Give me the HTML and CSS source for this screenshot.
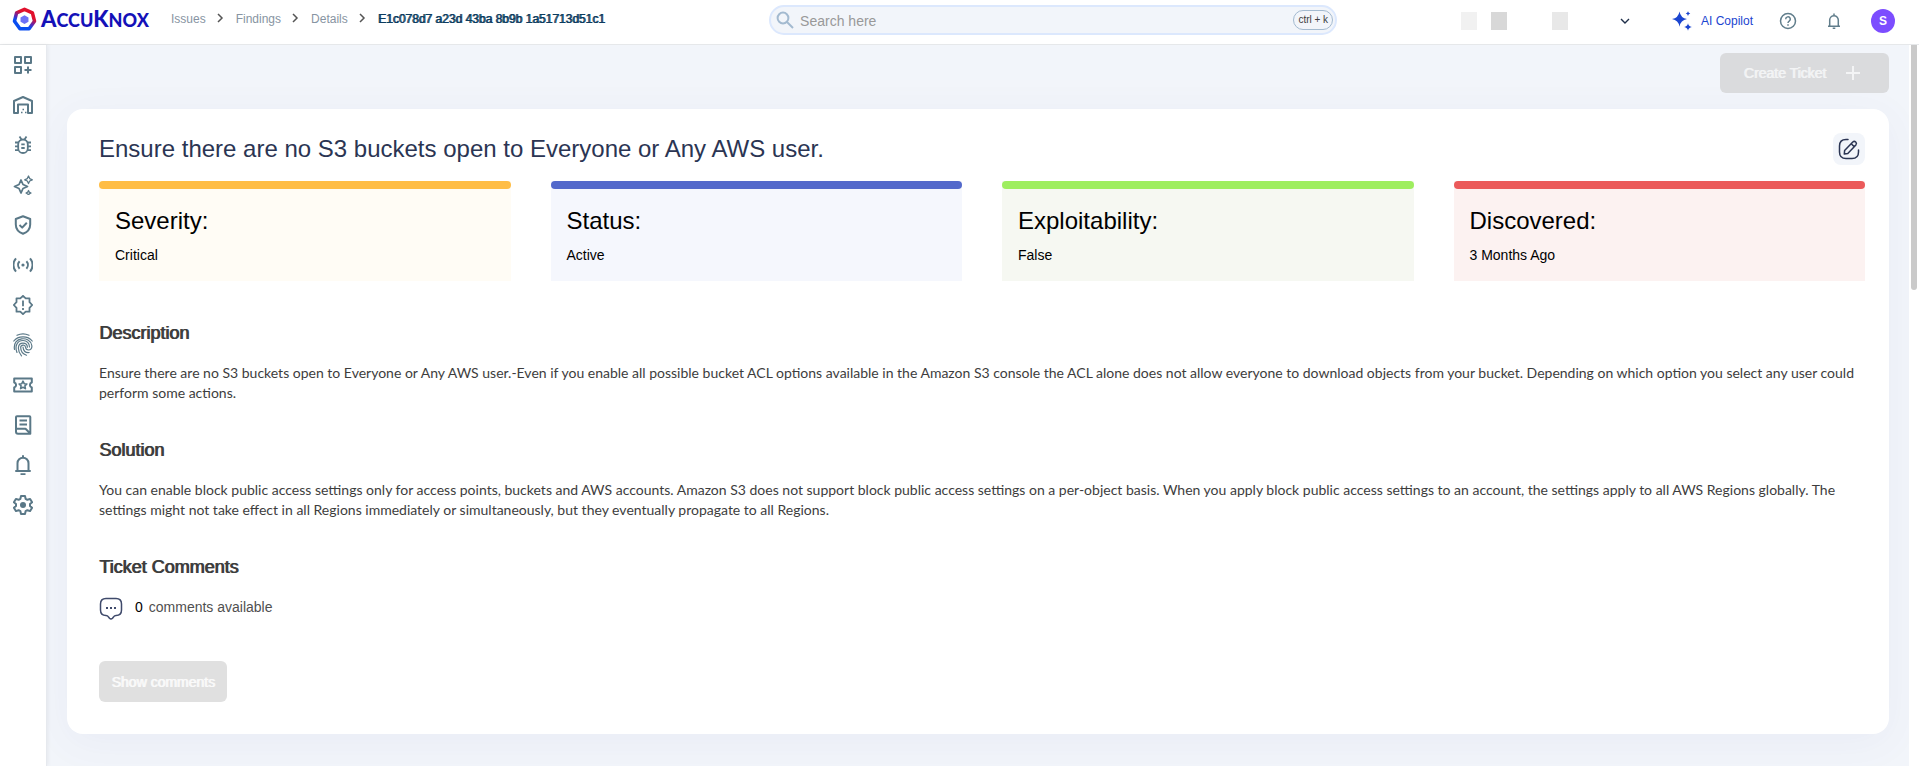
FILE: index.html
```html
<!DOCTYPE html>
<html lang="en">
<head>
<meta charset="utf-8">
<meta name="viewport" content="width=device-width, initial-scale=1">
<title>AccuKnox - Finding details</title>
<link rel="stylesheet" href="styles.css">
</head>
<body>
<div class="app">
  <header class="topbar">
    <div class="topbar-left">
      <a class="brand" href="#" aria-label="AccuKnox home">
        <svg class="brand-mark" viewBox="0 0 24 24" aria-hidden="true">
          <defs><linearGradient id="ring" x1="0.75" y1="0.1" x2="0.3" y2="0.9"><stop offset="0.25" stop-color="#e0102c"/><stop offset="0.6" stop-color="#5a28b4"/><stop offset="0.8" stop-color="#0a4df0"/></linearGradient></defs>
          <path d="M12 2.2 19.6 5.6 21.6 13.6 16.4 20.8H7.6L2.4 13.6 4.4 5.6Z" fill="none" stroke="url(#ring)" stroke-width="3.4" stroke-linejoin="round"/>
          <path d="M12 7.8 15.8 10v4.2L12 16.4l-3.8-2.2V10Z" fill="#6d70f5" stroke="none"/>
        </svg>
        <span class="brand-name">A<small>CCU</small>K<small>NOX</small></span>
      </a>
      <nav class="crumbs" aria-label="Breadcrumb">
        <a href="#">Issues</a>
        <svg viewBox="0 0 8 12" stroke-width="1.5" aria-hidden="true"><path d="m2 2 4 4-4 4"/></svg>
        <a href="#">Findings</a>
        <svg viewBox="0 0 8 12" stroke-width="1.5" aria-hidden="true"><path d="m2 2 4 4-4 4"/></svg>
        <a href="#">Details</a>
        <svg viewBox="0 0 8 12" stroke-width="1.5" aria-hidden="true"><path d="m2 2 4 4-4 4"/></svg>
        <span class="current" aria-current="page">E1c078d7 a23d 43ba 8b9b 1a51713d51c1</span>
      </nav>
    </div>
    <label class="search">
      <svg viewBox="0 0 18 18" stroke-width="2" aria-hidden="true"><circle cx="7" cy="7" r="5.4"/><path d="m11 11 6 6"/></svg>
      <input type="search" placeholder="Search here" aria-label="Search here">
      <kbd>ctrl + k</kbd>
    </label>
    <div class="topbar-right">
      <button class="tenant" type="button" aria-label="Select workspace">
        <i class="block b1"></i><i class="block b2"></i><i class="block b3"></i>
        <svg viewBox="0 0 10 6" stroke-width="1.4" aria-hidden="true"><path d="m1 1 4 4 4-4"/></svg>
      </button>
      <button class="copilot" type="button">
        <svg viewBox="0 0 20 20" aria-hidden="true"><path d="M7.5 0.5Q8.6 7 15 8.1 8.6 9.2 7.5 15.7 6.4 9.2 0 8.1 6.4 7 7.5 .5ZM16 .2q.4 2 2.3 2.4Q16.4 3 16 5q-.4-2-2.3-2.4Q15.6 2.2 16 .2ZM16 12.2q.6 3.2 3.8 3.8-3.2.6-3.8 3.8-.6-3.2-3.8-3.8 3.2-.6 3.8-3.8Z"/></svg>
        AI Copilot
      </button>
      <button class="round" type="button" aria-label="Help">
        <svg viewBox="0 0 18 18" stroke-width="1.5" aria-hidden="true"><circle cx="9" cy="9" r="7.5"/><path d="M6.7 7.2a2.3 2.3 0 1 1 3.5 1.9C9.3 9.7 9 10 9 11M9 12.2v1.6"/></svg>
      </button>
      <button class="round" type="button" aria-label="Notifications">
        <svg viewBox="0 0 18 18" stroke-width="1.5" aria-hidden="true"><path d="M4.7 14V8a4.3 4.3 0 0 1 8.6 0v6M3 14.2h12M9 1.4V3.5M7.7 16.3h2.6"/></svg>
      </button>
      <button class="avatar" type="button" aria-label="Account">S</button>
    </div>
  </header>

  <div class="body">
    <nav class="rail" aria-label="Main">
      <a href="#" aria-label="Dashboards"><svg viewBox="0 0 20 20"><path d="M2 2h6v6H2ZM12 2h6v6h-6ZM2 12h6v6H2ZM15 11.5v7M11.5 15h7"/></svg></a>
      <a href="#" aria-label="Inventory"><svg viewBox="0 0 20 20"><path d="M1 18V6l9-4 9 4v12h-4V9.500H5V18Z"/><path stroke-width="1.5" d="M8 17.500h1.500M12 17.500h1.500M9.500 14.500H11"/></svg></a>
      <a href="#" aria-label="Issues"><svg viewBox="0 0 20 20" stroke-width="1.8"><rect x="5.200" y="4.500" width="9.600" height="13.500" rx="4.800"/><path d="M6.500 1.500 8.500 4.500M13.500 1.500l-2 3M2 7.500h3.500M14.500 7.500H18M2 11.300h3M15 11.300h3M2 15.200h3.700M14.300 15.200H18M8.300 9.300h3.400M8.300 13h3.400"/></svg></a>
      <a href="#" aria-label="AI security"><svg viewBox="0 0 20 20"><path stroke-width="1.8" d="M8 5 10 9.500 14.500 11.500 10 13.500 8 18 6 13.500 1.500 11.500 6 9.500Z"/><path stroke-width="1.3" d="m15.500 1 1.200 2.600 2.600 1.200-2.600 1.200-1.200 2.600-1.200-2.600-2.600-1.200 2.600-1.200ZM15.500 15.500l.8 1.700 1.700.8-1.700.8-.8 1.200-.8-1.200-1.700-.8 1.700-.8Z"/></svg></a>
      <a href="#" aria-label="Compliance"><svg viewBox="0 0 20 20"><path d="M10 1.200 17.200 4v5.500c0 4.500-3 7.700-7.200 9.300-4.200-1.600-7.200-4.800-7.200-9.300V4ZM6.500 10l2.700 2.600 4.600-4.800"/></svg></a>
      <a href="#" aria-label="Runtime protection"><svg viewBox="0 0 20 20"><circle class="solid" cx="10" cy="10" r="1.600"/><path d="M6.600 6.300a5.400 5.400 0 0 0 0 7.400M13.400 6.300a5.400 5.400 0 0 1 0 7.400M3 3.300a10 10 0 0 0 0 13.400M17 3.300a10 10 0 0 1 0 13.400"/></svg></a>
      <a href="#" aria-label="Remediation"><svg viewBox="0 0 20 20" stroke-width="1.800"><path d="M10 .8l2.700 2.500h3.800v3.900L19.200 10l-2.700 2.800v3.900h-3.800L10 19.200l-2.700-2.500H3.500v-3.900L.8 10l2.700-2.800V3.300h3.800ZM10 5.500v5.700M10 13v2"/></svg></a>
      <a href="#" aria-label="Identity"><svg class="finger" viewBox="0 0 20 24" stroke-width="1.200" stroke-linecap="round"><path d="M4 2.300C7.500.6 12.500.6 16 2.300M.8 8C5 2.500 15 2.500 19.200 8M1.500 16.500C-.8 3.500 17 2.500 18.800 12.500c.5 3-1.300 4.500-3.300 4.500-1.800 0-2.800-1.200-3-3-.3-2.800-4.800-2.600-4.800.6 0 3.400 2 6.400 5.800 7.600M4 19.500C1.500 13.500 4 7.500 10 7.500c4 0 6.500 3 6.500 6.500M8.500 22.800C4.500 18.500 3.800 10.200 10 10.200c2.800 0 4.300 1.800 4.400 4M10 14c.2 4 2.500 6 6.200 5.500"/></svg></a>
      <a href="#" aria-label="Tickets"><svg viewBox="0 0 20 20"><path d="M1.200 3.500h17.600v4a2.600 2.600 0 0 0 0 5v4H1.200v-4a2.600 2.600 0 0 0 0-5Z"/><path stroke-width="1.600" d="m10 6.200 1.200 2.500 2.700.3-2 1.900.5 2.700-2.400-1.300-2.400 1.300.5-2.700-2-1.900 2.700-.3Z"/></svg></a>
      <a href="#" aria-label="Reports"><svg viewBox="0 0 20 20"><path d="M4 1.200h12.500q.8 0 .8.800v16.800H5q-2 0-2-2V2q0-.8 1-.8ZM3 13.800h9.500l4.500 4.500M6.500 5.500h7.500M6.500 9.500h7.500"/></svg></a>
      <a href="#" aria-label="Notifications"><svg viewBox="0 0 20 20"><path d="M4.500 15V8.200a5.500 5.500 0 0 1 11 0V15l1.500 1H3ZM10 .2v2M7.500 19.200h5"/></svg></a>
      <a href="#" aria-label="Settings"><svg viewBox="0 0 20 20"><path d="M8 1h4l.6 2.800 1.800 1 2.700-.9 2 3.400L17 9.100v1.800l2.100 1.800-2 3.400-2.700-.9-1.800 1L12 19H8l-.6-2.800-1.800-1-2.700.9-2-3.400L3 10.900V9.100L.9 7.300l2-3.400 2.700.9 1.800-1Z"/><circle class="solid" cx="10" cy="10" r="3"/></svg></a>
    </nav>

    <main class="content">
      <div class="actions">
        <button class="btn create" type="button" disabled>Create Ticket
          <svg viewBox="0 0 14 14" stroke-width="2" aria-hidden="true"><path d="M7 0v14M0 7h14"/></svg>
        </button>
      </div>
      <article class="card">
        <div class="card-head">
          <h1>Ensure there are no S3 buckets open to Everyone or Any AWS user.</h1>
          <button class="edit" type="button" aria-label="Edit">
            <svg viewBox="0 0 22 22" stroke-width="1.500" stroke-linecap="round" aria-hidden="true"><path d="M10 1.500H8Q1.500 1.500 1.500 8v6q0 6.500 6.500 6.500h6q6.500 0 6.500-6.500v-2"/><path d="M6.300 16 6.600 12.600 14.800 4q1.500-1.300 2.900 0t.2 2.900L9.800 15.400ZM13.200 5.700l3 2.900"/></svg>
          </button>
        </div>
        <section class="stats" aria-label="Summary">
          <div class="stat severity"><h2>Severity:</h2><p>Critical</p></div>
          <div class="stat status"><h2>Status:</h2><p>Active</p></div>
          <div class="stat exploit"><h2>Exploitability:</h2><p>False</p></div>
          <div class="stat found"><h2>Discovered:</h2><p>3 Months Ago</p></div>
        </section>
        <section class="text-block">
          <h3>Description</h3>
          <p>Ensure there are no S3 buckets open to Everyone or Any AWS user.-Even if you enable all possible bucket ACL options available in the Amazon S3 console the ACL alone does not allow everyone to download objects from your bucket. Depending on which option you select any user could perform some actions.</p>
        </section>
        <section class="text-block">
          <h3>Solution</h3>
          <p>You can enable block public access settings only for access points, buckets and AWS accounts. Amazon S3 does not support block public access settings on a per-object basis. When you apply block public access settings to an account, the settings apply to all AWS Regions globally. The settings might not take effect in all Regions immediately or simultaneously, but they eventually propagate to all Regions.</p>
        </section>
        <section class="comments">
          <h3>Ticket Comments</h3>
          <div class="comment-count">
            <svg viewBox="0 0 24 24" stroke-width="1.500" aria-hidden="true"><path d="M7 1.500h10q5.500 0 5.500 5.500v6q0 5.500-5.500 5.500-1.500 0-2.300 1.200l-1.200 1.600q-1.500 1.400-3 0l-1.200-1.600Q8.500 18.500 7 18.500q-5.500 0-5.500-5.500V7Q1.500 1.500 7 1.500Z"/><path stroke-width="2" d="M7 11h2M11 11h2M15 11h2"/></svg>
            <strong>0</strong><span>comments available</span>
          </div>
          <button class="btn show" type="button" disabled>Show comments</button>
        </section>
      </article>
    </main>
    <div class="track" aria-hidden="true"><div class="thumb"></div></div>
  </div>
</div>
</body>
</html>
```
FILE: styles.css
```css
* { box-sizing: border-box; }

body {
  margin: 0;
  font-family: "Liberation Sans", Arial, sans-serif;
  font-size: 14px;
  line-height: 20px;
  color: #3d3d3d;
  background: #fff;
}

h1, h2, h3, p { margin: 0; }
a { color: inherit; text-decoration: none; }
svg { display: block; flex: none; fill: none; stroke: currentColor; }
button, input { font: inherit; color: inherit; border: 0; background: none; padding: 0; margin: 0; }

.app { display: flex; flex-direction: column; height: 100vh; overflow: hidden; }

/* Top bar */
.topbar {
  display: grid;
  grid-template-columns: 19fr minmax(200px, 568px) 14fr;
  flex: none;
  height: 45px;
  padding: 0 24px 0 12px;
  border-bottom: 1px solid #e6e8ea;
}
.topbar-left { display: flex; align-items: center; height: 38px; }
.brand { display: flex; align-items: center; gap: 4px; width: 159px; }
.brand-mark { width: 25px; height: 25px; }
.brand-name { font-family: Lato, sans-serif; font-size: 22px; font-weight: 900; color: #1411b8; }
.brand-name small { font-size: 18px; }
.crumbs { display: flex; align-items: center; font-size: 12px; color: #8794a2; white-space: nowrap; }
.crumbs svg { width: 8px; height: 12px; margin: 0 12px 2px 10px; color: #555; }
.crumbs .current { color: #0c3c60; text-shadow: 1px 0 currentColor; }

.search {
  display: flex;
  align-items: center;
  height: 30px;
  margin-top: 5px;
  padding: 0 2px 0 5px;
  border: 2px solid #dce8fd;
  border-radius: 15px;
  background: #f2f5fa;
}
.search svg { width: 18px; height: 18px; color: #a3bad0; }
.search input { flex: 1; min-width: 0; margin-left: 6px; padding-top: 2px; outline: 0; }
.search input::placeholder { color: #999; opacity: 1; }
.search kbd {
  height: 20px;
  padding: 0 4px;
  border: 1px solid #a3bad0;
  border-radius: 10px;
  font: 10px/18px "Liberation Sans", Arial, sans-serif;
}

.topbar-right { display: flex; align-items: center; justify-content: flex-end; height: 42px; }
.tenant { display: flex; align-items: center; color: #1f2f4a; margin-right: 42px; }
.tenant svg { width: 10px; height: 6px; }
.block { width: 16px; height: 18px; }
.b1 { background: #f1f1f1; margin-right: 14px; }
.b2 { background: #d8d8d8; margin-right: 45px; }
.b3 { background: #e8e8e8; margin-right: 52px; }
.copilot { display: flex; align-items: center; gap: 9px; color: #1b45d0; font-size: 12px; margin-right: 26px; }
.copilot svg { width: 20px; height: 20px; fill: currentColor; stroke: none; }
.round { color: #607d8b; margin-right: 28px; }
.round svg { width: 18px; height: 18px; }
.avatar {
  width: 24px;
  height: 24px;
  border-radius: 50%;
  background: #7c4dff;
  color: #fff;
  font-size: 12px;
  font-weight: bold;
}

/* Side rail */
.body { display: flex; flex: 1; min-height: 0; }
.rail { flex: none; width: 47px; border-right: 1px solid #e6e9ee; color: #5a7887; z-index: 1; box-shadow: 1px 0 4px rgba(0, 0, 0, .06); }
.rail a { display: flex; align-items: center; justify-content: center; height: 40px; stroke-width: 2; }
.rail svg { width: 20px; height: 20px; stroke-linejoin: round; }
.rail .finger { height: 24px; }
.rail .solid { fill: currentColor; stroke: none; }

/* Page */
.content { flex: 1; min-width: 0; padding: 8px 20px 32px; background: #f2f5fa; overflow: hidden; }
.actions { display: flex; justify-content: flex-end; margin-bottom: 16px; }
.btn { height: 40px; border-radius: 6px; background: #e0e0e0; color: #fafafa; text-shadow: 1px 0 currentColor; }
.create { display: flex; align-items: center; gap: 20px; padding: 0 29px 0 24px; background: #dadbdd; color: #f3f4f5; }
.create svg { width: 14px; height: 14px; }

.card {
  padding: 24px 24px 32px 32px;
  border-radius: 16px;
  background: #fff;
  box-shadow: 0 8px 40px rgba(90, 90, 170, .06);
}
.card-head { display: flex; align-items: center; justify-content: space-between; margin-bottom: 16px; }
h1 { font-size: 24px; line-height: 32px; font-weight: normal; color: #2b3553; }
.edit { width: 32px; height: 32px; padding: 5px; border-radius: 8px; background: #f2f5fa; color: #2b3553; }
.edit svg { width: 22px; height: 22px; stroke-linejoin: round; }

.stats { display: grid; grid-template-columns: repeat(4, 1fr); gap: 40px; margin-bottom: 40px; }
.stat { padding: 0 16px 16px; color: #000; }
.stat::before { content: ""; display: block; height: 8px; margin: 0 -16px 16px; border-radius: 4px; }
.stat h2 { font-size: 24px; line-height: 32px; font-weight: normal; margin-bottom: 8px; }
.severity { background: #fffcf5; }
.severity::before { background: #ffbd45; }
.status { background: #f5f7fd; }
.status::before { background: #5369cb; }
.exploit { background: #f6f8f2; }
.exploit::before { background: #9eee5f; }
.found { background: #fcf2f1; }
.found::before { background: #eb5a5a; }

h3 { font-size: 18px; line-height: 24px; font-weight: normal; text-shadow: 1px 0 currentColor; }
.text-block { margin-bottom: 35px; }
.text-block h3 { margin-bottom: 18px; }
.text-block p { font-family: Lato, "Liberation Sans", sans-serif; }
.comments h3 { margin-bottom: 18px; }
.comment-count { display: flex; align-items: flex-start; color: #505050; margin-bottom: 40px; }
.comment-count svg { width: 24px; height: 24px; margin-right: 12px; color: #3f4a6b; }
.comment-count strong { font-weight: normal; color: #000; margin-right: 6px; }
.show { min-width: 128px; height: 41px; padding: 0 8px; }

/* Scroll indicator */
.track { flex: none; width: 10px; padding: 0 2px; background: #fff; }
.thumb { height: 34%; border-radius: 0 0 4px 4px; background: #cacaca; }
```
